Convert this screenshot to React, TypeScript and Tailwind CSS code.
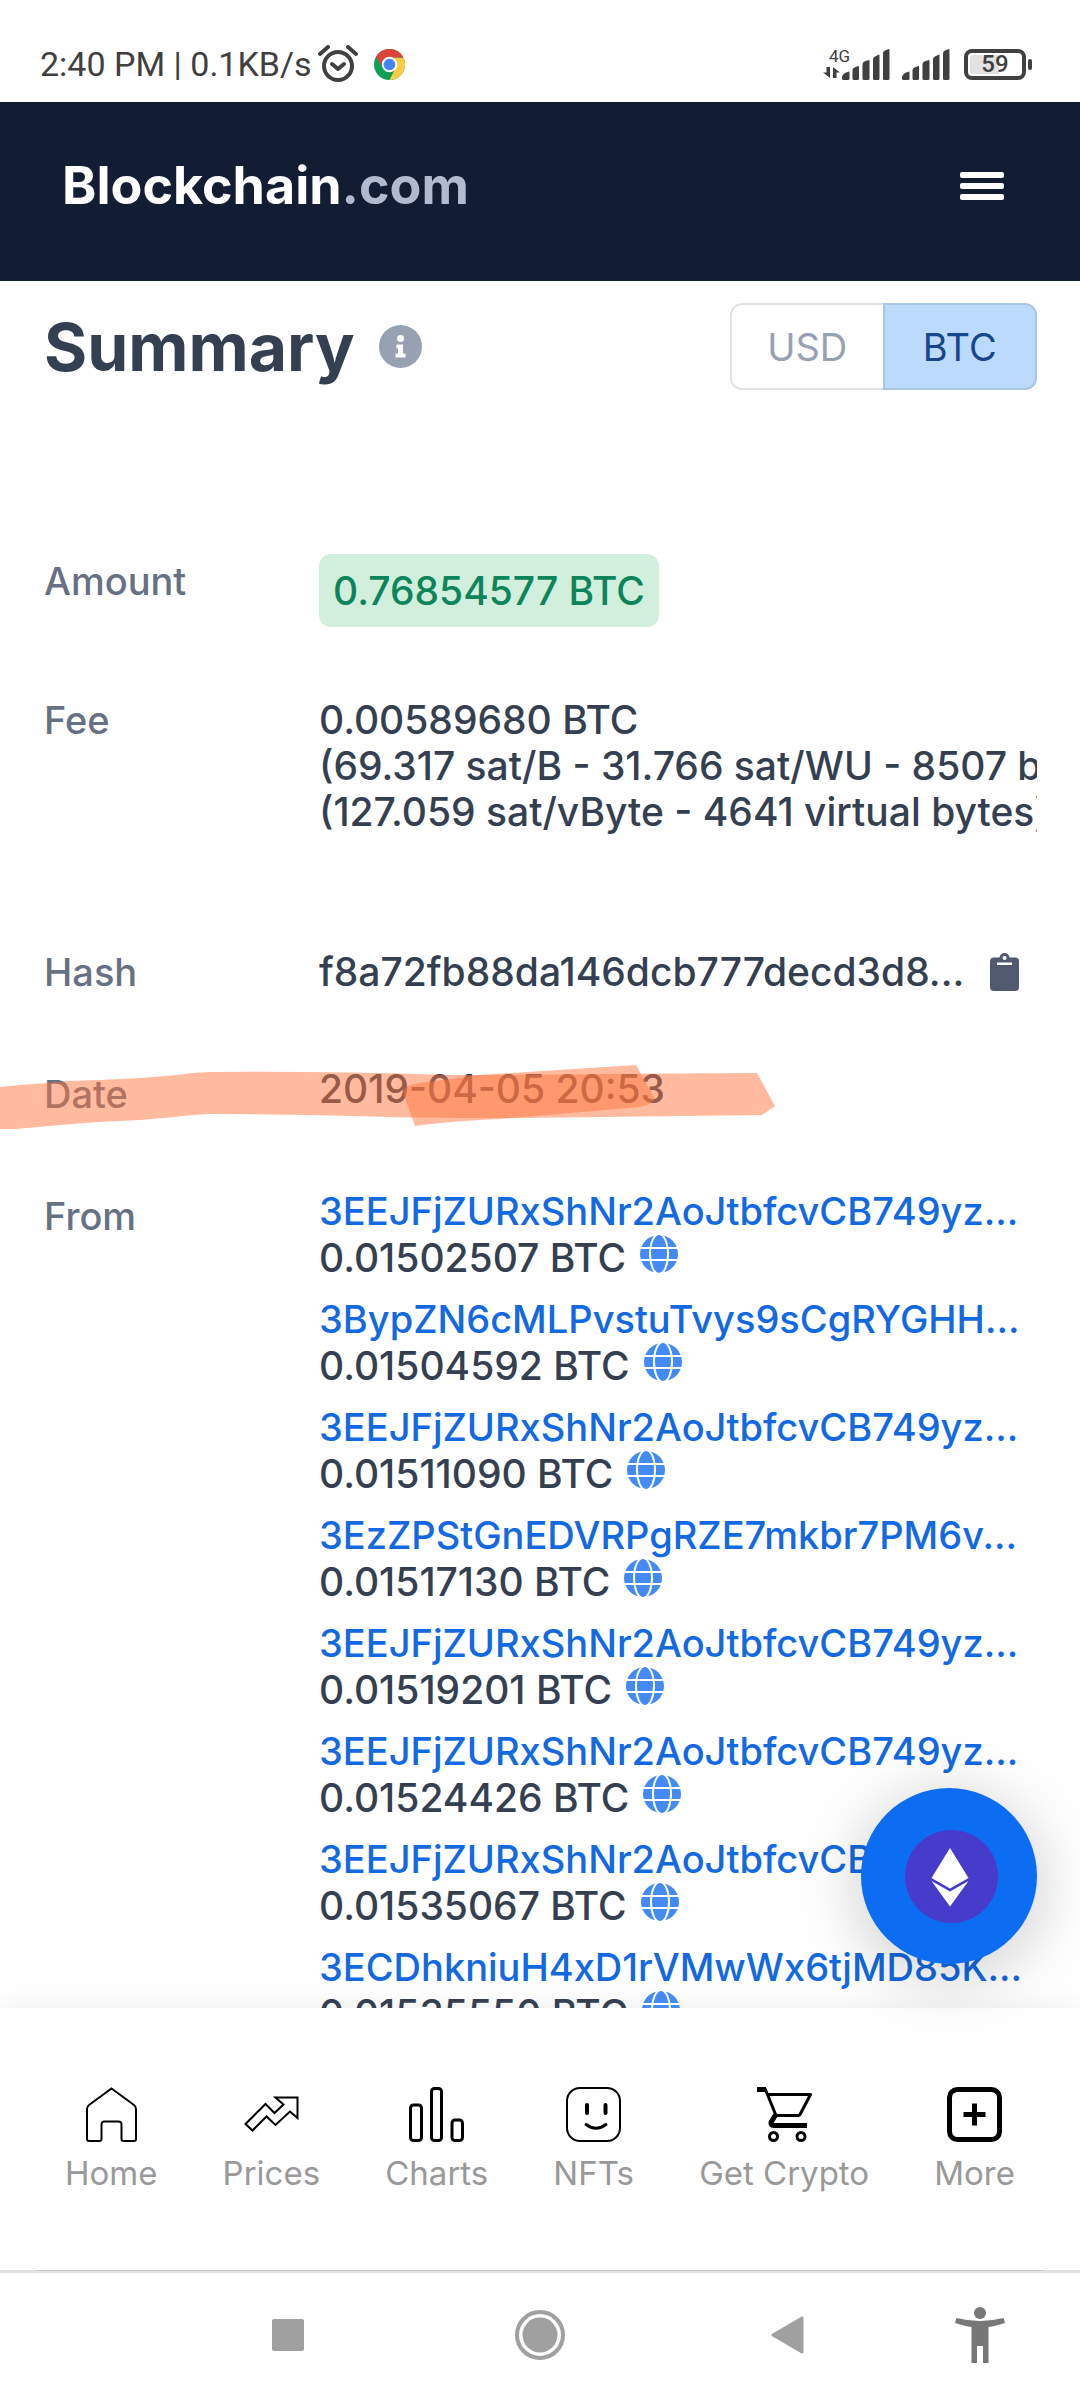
import { useState, type ReactNode } from "react";

const inputs = [
  { address: "3EEJFjZURxShNr2AoJtbfcvCB749yz...", amount: "0.01502507 BTC" },
  { address: "3BypZN6cMLPvstuTvys9sCgRYGHH...", amount: "0.01504592 BTC" },
  { address: "3EEJFjZURxShNr2AoJtbfcvCB749yz...", amount: "0.01511090 BTC" },
  { address: "3EzZPStGnEDVRPgRZE7mkbr7PM6v...", amount: "0.01517130 BTC" },
  { address: "3EEJFjZURxShNr2AoJtbfcvCB749yz...", amount: "0.01519201 BTC" },
  { address: "3EEJFjZURxShNr2AoJtbfcvCB749yz...", amount: "0.01524426 BTC" },
  { address: "3EEJFjZURxShNr2AoJtbfcvCB749yz...", amount: "0.01535067 BTC" },
  { address: "3ECDhkniuH4xD1rVMwWx6tjMD85K...", amount: "0.01535550 BTC" },
];

function Signal() {
  return (
    <svg width="48" height="31" viewBox="0 0 48 31" fill="#404040" aria-hidden="true">
      <path d="M0 28q0-2 3-4l4-1.500q.5 0 .5 1V29.500q0 1.500-1.500 1.500H1.500Q0 31 0 29.500z" />
      <path d="M10.500 21q0-2 3-3l3-1q.5 0 .5 1v11.500q0 1.500-1.500 1.500H12q-1.500 0-1.500-1.500z" />
      <path d="M20.500 15q0-2 3-3l3.500-1q.5 0 .5 1v17.500q0 1.500-1.500 1.500H22q-1.500 0-1.500-1.500z" />
      <path d="M31 10q0-2 3-3l3-1.500q.5 0 .5 1v23q0 1.500-1.500 1.500h-3.500Q31 31 31 29.500z" />
      <path d="M41 4q0-2 3-3l3-1q.5 0 .5 1v28.500q0 1.500-1.500 1.500h-3.500q-1.500 0-1.500-1.500z" />
    </svg>
  );
}

function StatusBar() {
  return (
    <div className="flex h-[102px] shrink-0 items-center justify-between pt-[26px] pr-12 pl-10 font-[Roboto,sans-serif] text-[#404040]">
      <div className="flex items-center">
        <span className="text-[34px] leading-10 whitespace-nowrap">2:40 PM | 0.1KB/s</span>
        <svg className="ml-1.5" width="40" height="38" viewBox="0 0 40 38" fill="none" stroke="#404040" role="img" aria-label="Alarm set">
          <circle cx="20" cy="21" r="14" strokeWidth="4" />
          <path d="M2 9l8-7M38 9l-8-7" strokeWidth="4" strokeLinecap="round" />
          <path d="M14 19l6 5 6-5" strokeWidth="4" strokeLinecap="round" strokeLinejoin="round" />
        </svg>
        <svg className="ml-4" width="31" height="31" viewBox="0 0 48 48" role="img" aria-label="Chrome">
          <circle cx="24" cy="24" r="24" fill="#0f9d58" />
          <path d="M24 13h21.400A24 24 0 0 1 24 48l9.500-18.500z" fill="#ffcd40" />
          <path d="M3.200 12A24 24 0 0 1 45.400 13H24a11 11 0 0 0-9.500 16.500z" fill="#db4437" />
          <circle cx="24" cy="24" r="12" fill="#fff" />
          <circle cx="24" cy="24" r="9" fill="#4285f4" />
        </svg>
      </div>
      <div className="flex items-end">
        <div className="relative mr-0.5 pb-0.5">
          <span className="absolute bottom-3.5 left-1.5 text-[17px] leading-5">4G</span>
          <svg width="17" height="11" viewBox="0 0 17 11" fill="#404040" aria-hidden="true">
            <path d="M3.500 0H7v11L0 5.500h3.500zM10 0l7 5.500h-3.500V11H10z" />
          </svg>
        </div>
        <Signal />
        <div className="ml-3">
          <Signal />
        </div>
        <div className="ml-3.5 flex items-center gap-0.5">
          <div className="h-[31px] w-[62px] rounded-lg border-4 border-[#404040] bg-white p-0.5">
            <div className="flex h-full items-center justify-center rounded-sm bg-linear-to-r from-[#e2e2e2] from-59% to-white to-59% text-[24px] leading-6 font-medium">
              59
            </div>
          </div>
          <div className="h-[11px] w-1 rounded-full bg-[#404040]" />
        </div>
      </div>
    </div>
  );
}

function Globe() {
  return (
    <svg width="38" height="38" viewBox="0 0 38 38" aria-hidden="true">
      <circle cx="19" cy="19" r="19" fill="#438af2" />
      <g fill="none" stroke="#fff" strokeWidth="2">
        <ellipse cx="19" cy="19" rx="9" ry="20" />
        <path d="M0 13h38M0 25h38" />
      </g>
    </svg>
  );
}

function Row({
  label,
  className = "",
  labelClassName = "",
  children,
}: {
  label: string;
  className?: string;
  labelClassName?: string;
  children: ReactNode;
}) {
  return (
    <div className={`grid grid-cols-[275px_minmax(0,1fr)] ${className}`}>
      <dt className={`text-[#677184] ${labelClassName}`}>{label}</dt>
      <dd className="min-w-0 text-[39px] text-[#353f52]">{children}</dd>
    </div>
  );
}

function Highlight() {
  return (
    <svg
      className="pointer-events-none absolute -top-1 -left-11"
      width="778"
      height="68"
      viewBox="0 1062 778 68"
      fill="#ff7640"
      fillOpacity="0.5"
      aria-hidden="true"
    >
      <path d="M0 1087L20 1085Q50 1083 68 1081L100 1080 140 1078 178 1075Q195 1072 215 1072 320 1071 450 1075 520 1075 600 1074L757 1073 775 1106 762 1115 520 1118Q430 1118 390 1117 300 1114 210 1114 190 1115 175 1117L140 1120 98 1122 60 1125 15 1129H0z" />
      <path d="M636 1065L655 1099Q650 1105 640 1107L500 1119Q450 1121 415 1126L403 1092Q405 1085 420 1083L480 1075z" />
    </svg>
  );
}

const navItems: { label: string; icon: ReactNode }[] = [
  {
    label: "Home",
    icon: (
      <path
        d="M27.500 1.500L50 18Q52 19.500 52 22V52Q52 54 50 54H39.500Q37.500 54 37.500 52V37.500Q37.500 34.500 34.500 34.500H20.500Q17.500 34.500 17.500 37.500V52Q17.500 54 15.500 54H5Q3 54 3 52V22Q3 19.500 5 18z"
        strokeWidth="2"
      />
    ),
  },
  {
    label: "Prices",
    icon: (
      <path d="M1.500 37L21.500 17 30.500 26 39.500 17.500 31.500 10.500H53.500V31L46 24.500 31.500 38 22.500 29.500 8.500 43.500z" strokeWidth="2" />
    ),
  },
  {
    label: "Charts",
    icon: (
      <g strokeWidth="3">
        <rect x="1.500" y="18" width="11" height="35.500" rx="3" />
        <rect x="22.500" y="1.500" width="10" height="52" rx="3" />
        <rect x="43" y="33" width="10.500" height="20.500" rx="3" />
      </g>
    ),
  },
  {
    label: "NFTs",
    icon: (
      <>
        <rect x="1" y="1" width="53" height="53" rx="13" strokeWidth="2" />
        <path d="M21 18v8M39.500 18v8" strokeWidth="4" strokeLinecap="round" />
        <path d="M20 37.500Q30 45 40 37.500" strokeWidth="3" strokeLinecap="round" />
      </>
    ),
  },
  {
    label: "Get Crypto",
    icon: (
      <>
        <path d="M0 2.500H9" strokeWidth="5" />
        <path d="M8 1.500L19 28.500H41.500Q42.500 28.500 43 27.500L53.500 7.500H11" strokeWidth="3" strokeLinejoin="round" />
        <path d="M18.500 28L14 35.500Q13.500 38.500 16.500 38.500H50" strokeWidth="5" />
        <circle cx="16.500" cy="49.500" r="4" strokeWidth="3" />
        <circle cx="44" cy="49.500" r="4" strokeWidth="3" />
      </>
    ),
  },
  {
    label: "More",
    icon: (
      <g strokeWidth="5">
        <rect x="2.500" y="2.500" width="50" height="50" rx="8" />
        <path d="M27.500 16.500v22M16.500 27.500h22" />
      </g>
    ),
  },
];

function TabBar() {
  return (
    <nav className="h-[262px] shrink-0 bg-white pt-[79px] shadow-[0_0_28px_rgba(0,0,0,0.08)]">
      <ul className="flex justify-between px-[65px]">
        {navItems.map(({ label, icon }) => (
          <li key={label}>
            <a href="#" className="flex flex-col items-center gap-[11px] text-[33px] leading-10 whitespace-nowrap text-[#999]">
              <svg width="55" height="55" viewBox="0 0 55 55" fill="none" stroke="#000" aria-hidden="true">
                {icon}
              </svg>
              {label}
            </a>
          </li>
        ))}
      </ul>
    </nav>
  );
}

function SystemBar() {
  return (
    <div className="relative h-[130px] shrink-0 border-t-[3px] border-[#e1e1e1] bg-white">
      <div className="absolute inset-x-9 -top-[3px] h-px bg-[#c8c8c8]" />
      <div className="grid h-[124px] grid-cols-[160fr_256fr_248fr_246fr_140fr_30fr] items-center">
        <button aria-label="Recent apps" className="col-start-2 justify-self-center">
          <span className="block size-8 rounded-xs bg-[#a0a0a0]" />
        </button>
        <button aria-label="Home" className="justify-self-center">
          <svg width="50" height="50" viewBox="0 0 50 50" aria-hidden="true">
            <circle cx="25" cy="25" r="23" fill="none" stroke="#a0a0a0" strokeWidth="4" />
            <circle cx="25" cy="25" r="17.500" fill="#a0a0a0" />
          </svg>
        </button>
        <button aria-label="Back" className="justify-self-center">
          <svg width="33" height="38" viewBox="0 0 33 38" aria-hidden="true">
            <path d="M2 19L31 2v34z" fill="#a0a0a0" stroke="#a0a0a0" strokeWidth="3" strokeLinejoin="round" />
          </svg>
        </button>
        <button aria-label="Accessibility" className="justify-self-center">
          <svg width="50" height="56" viewBox="0 0 50 56" fill="#777" aria-hidden="true">
            <circle cx="25" cy="6" r="6" />
            <path d="M1.500 11Q25 17 48.500 11L50 16Q41 19 33.500 20V56H28V39H22V56H16.500V20Q9 19 0 16z" />
          </svg>
        </button>
      </div>
    </div>
  );
}

export default function App() {
  const [unit, setUnit] = useState("BTC");
  const unitClass = (name: string) =>
    unit === name ? "border-[#abc6e3] bg-[#bbdafc] text-[#17468f]" : "border-[#e3e3e3] bg-white text-[#98a1b2]";

  return (
    <div className="flex h-screen flex-col overflow-hidden bg-white font-[Inter,sans-serif]">
      <StatusBar />
      <header className="flex h-[179px] shrink-0 items-center justify-between bg-[#121d33] pr-[76px] pb-3 pl-[62px]">
        <a href="#" className="text-[52px] leading-16 font-bold text-white">
          Blockchain<span className="text-[#b1bacf]">.com</span>
        </a>
        <button aria-label="Menu" className="flex w-11 flex-col gap-[5px]">
          <span className="h-1.5 rounded-xs bg-white" />
          <span className="h-1.5 rounded-xs bg-white" />
          <span className="h-1.5 rounded-xs bg-white" />
        </button>
      </header>

      <div className="relative flex min-h-0 flex-1 flex-col">
        <main className="min-h-0 flex-1 overflow-hidden pt-[22px] pr-[43px] pl-11 text-[38px] leading-[46px] font-medium">
          <div className="flex items-center justify-between">
            <div className="flex items-center gap-6">
              <h1 className="text-[66px] leading-20 font-bold text-[#353f52]">Summary</h1>
              <button aria-label="About this summary">
                <svg width="43" height="43" viewBox="0 0 43 43" aria-hidden="true">
                  <circle cx="21.500" cy="21.500" r="21.500" fill="#98a1b2" />
                  <circle cx="21.500" cy="13.500" r="3.500" fill="#fff" />
                  <path d="M17.500 19.500h6.500v9h2.500v4h-10v-4h2.500v-5h-1.500z" fill="#fff" />
                </svg>
              </button>
            </div>
            <div className="flex h-[87px] w-[307px] font-normal">
              <button onClick={() => setUnit("USD")} className={`flex-1 rounded-l-xl border-2 border-r-0 ${unitClass("USD")}`}>
                USD
              </button>
              <button onClick={() => setUnit("BTC")} className={`flex-1 rounded-r-xl border-2 ${unitClass("BTC")}`}>
                BTC
              </button>
            </div>
          </div>

          <dl className="mt-[164px]">
            <Row label="Amount" labelClassName="pt-1">
              <span className="inline-flex h-[73px] items-center rounded-xl bg-[#d1efdc] px-3.5 text-[#0c855a]">
                0.76854577 BTC
              </span>
            </Row>
            <Row label="Fee" className="mt-[70px]">
              <div className="overflow-hidden whitespace-nowrap">
                <p>0.00589680 BTC</p>
                <p>(69.317 sat/B - 31.766 sat/WU - 8507 bytes)</p>
                <p>(127.059 sat/vByte - 4641 virtual bytes)</p>
              </div>
            </Row>
            <Row label="Hash" className="mt-[114px]">
              <div className="flex items-center justify-between pr-[18px]">
                <span className="truncate">f8a72fb88da146dcb777decd3d8...</span>
                <button aria-label="Copy hash" className="shrink-0">
                  <svg width="29" height="38" viewBox="0 0 29 38" aria-hidden="true">
                    <rect y="4.500" width="29" height="33.500" rx="4" fill="#50596d" />
                    <circle cx="14.500" cy="5" r="5" fill="#50596d" />
                    <circle cx="14.500" cy="5" r="2" fill="#fff" />
                    <rect x="7" y="9.500" width="15" height="2.500" fill="#fff" />
                  </svg>
                </button>
              </div>
            </Row>
            <Row label="Date" className="relative mt-[71px]" labelClassName="pt-[5px]">
              2019-04-05 20:53
              <Highlight />
            </Row>
            <Row label="From" className="mt-[71px]" labelClassName="pt-[5px]">
              <ul className="flex flex-col gap-[15px]">
                {inputs.map(({ address, amount }) => (
                  <li key={amount}>
                    <a href="#" className="block text-[38px] leading-[47px] whitespace-nowrap text-[#1269e2]">
                      {address}
                    </a>
                    <p className="flex items-start gap-3.5">
                      {amount}
                      <Globe />
                    </p>
                  </li>
                ))}
              </ul>
            </Row>
          </dl>
        </main>
        <button
          aria-label="Open Ethereum wallet"
          className="absolute right-[43px] bottom-11 flex size-44 items-center justify-center rounded-full bg-[#0c6cf2] shadow-[0_10px_70px_rgba(0,0,0,0.22)]"
        >
          <svg className="ml-1" width="93" height="93" viewBox="0 0 93 93" aria-hidden="true">
            <circle cx="46.500" cy="46.500" r="46.500" fill="#473bcb" />
            <path d="M45 18L63.500 48 45 58.500 26.500 48z" fill="#fff" />
            <path d="M26.500 51L45 61.500 63.500 51 45 76.500z" fill="#fff" />
          </svg>
        </button>
      </div>
      <TabBar />
      <SystemBar />
    </div>
  );
}
